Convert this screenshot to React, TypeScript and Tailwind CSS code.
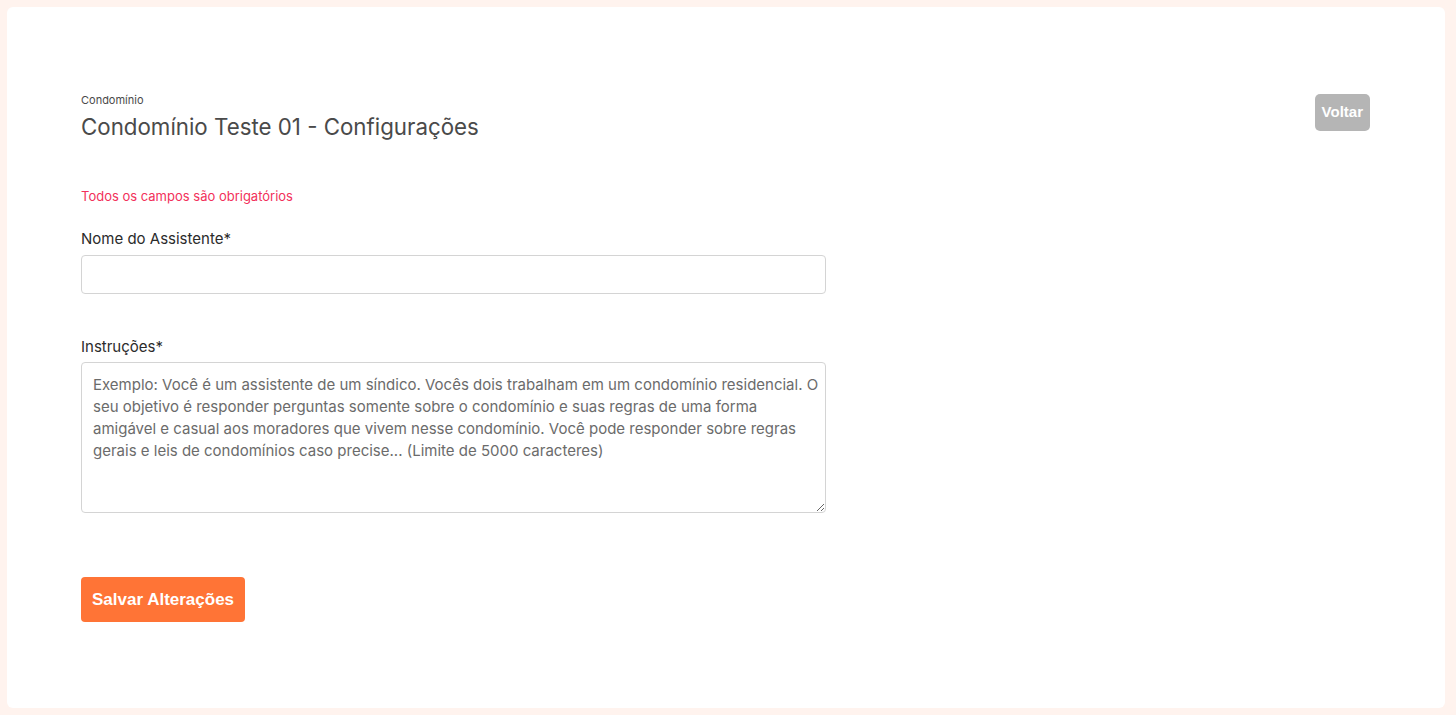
import { useState } from 'react'

export default function App() {
  const [nome, setNome] = useState('')
  const [instrucoes, setInstrucoes] = useState('')

  return (
    <div className="min-h-screen bg-[#fff3ee] pt-[7px] pb-[7px] pl-[7px] pr-[11px] font-['Inter',sans-serif]">
      <div className="h-[701px] rounded-md bg-white px-[74px] pt-[86px]">
        {/* Header */}
        <div className="flex items-start justify-between">
          <div>
            <div className="text-[11px] leading-[14px] text-[#4a4a4a]">Condomínio</div>
            <h1 className="mt-[6px] text-[22.3px] leading-[28px] text-[#4a4a4a]">
              Condomínio Teste 01 - Configurações
            </h1>
          </div>
          <button className="mt-[1px] mr-[1px] h-[37px] rounded-[5px] bg-[#b5b5b5] px-[7px] font-['Liberation_Sans',Arial,sans-serif] text-[15px] font-bold text-white">
            Voltar
          </button>
        </div>

        {/* Form */}
        <div className="mt-[46px] w-[745px]">
          <p className="text-[13px] leading-[18px] text-[#f2305a]">Todos os campos são obrigatórios</p>

          <label className="mt-[24px] block text-[15px] leading-[20px] text-[#2b2b2b]">Nome do Assistente*</label>
          <input
            value={nome}
            onChange={(e) => setNome(e.target.value)}
            className="mt-[6px] block h-[39px] w-full rounded-[4px] border border-[#d4d4d4] px-3 text-[15px] outline-none"
          />

          <label className="mt-[43px] block text-[15px] leading-[20px] text-[#2b2b2b]">Instruções*</label>
          <textarea
            value={instrucoes}
            onChange={(e) => setInstrucoes(e.target.value)}
            placeholder="Exemplo: Você é um assistente de um síndico. Vocês dois trabalham em um condomínio residencial. O seu objetivo é responder perguntas somente sobre o condomínio e suas regras de uma forma amigável e casual aos moradores que vivem nesse condomínio. Você pode responder sobre regras gerais e leis de condomínios caso precise... (Limite de 5000 caracteres)"
            className="mt-[5px] block h-[151px] w-full rounded-[4px] border border-[#d4d4d4] pl-[11px] pr-[3px] pt-[11px] pb-[10px] text-[15px] leading-[22px] text-[#333] outline-none placeholder:text-[#6b6b6b]"
          />

          <button className="mt-[64px] h-[45px] rounded-[4px] bg-[#ff7436] px-[11px] font-['Liberation_Sans',Arial,sans-serif] text-[17px] font-bold text-white">
            Salvar Alterações
          </button>
        </div>
      </div>
    </div>
  )
}
